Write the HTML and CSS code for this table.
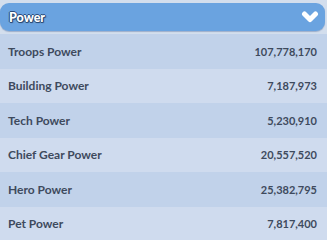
FILE: index.html
```html
<!DOCTYPE html>
<html>
<head>
<meta charset="utf-8">
<link rel="stylesheet" href="styles.css">
</head>
<body>
<div class="panel">
  <div class="header">
    <span class="title">Power</span>
    <svg class="chev" width="18" height="14" viewBox="0 0 18 14"><path d="M3.5 4 L9 9.5 L14.5 4" fill="none" stroke="#fff" stroke-width="5" stroke-linecap="round" stroke-linejoin="round"/></svg>
  </div>
  <div class="rows">
    <div class="row odd"><span>Troops Power</span><span class="num">107,778,170</span></div>
    <div class="row"><span>Building Power</span><span class="num">7,187,973</span></div>
    <div class="row odd"><span>Tech Power</span><span class="num">5,230,910</span></div>
    <div class="row"><span>Chief Gear Power</span><span class="num">20,557,520</span></div>
    <div class="row odd"><span>Hero Power</span><span class="num">25,382,795</span></div>
    <div class="row"><span>Pet Power</span><span class="num">7,817,400</span></div>
  </div>
</div>
</body>
</html>
```
FILE: styles.css
```css
html, body { margin: 0; padding: 0; }
body {
  width: 327px; height: 240px; overflow: hidden;
  background: #d3deed;
  font-family: Lato, "Open Sans", sans-serif;
}
.panel { padding-top: 3px; }
.header {
  height: 28px;
  margin-right: 2px;
  background: #6aa3e0;
  border-radius: 9px;
  box-shadow: 0 1px 1px rgba(60,90,140,0.35);
  display: flex; align-items: center; justify-content: space-between;
  padding: 0 6px 0 9px;
}
.title {
  color: #fff; font-weight: 900; font-size: 12.5px;
  text-shadow: 0 1px 0 #2a4c78, 1px 0 0 #2a4c78, -1px 0 0 #2a4c78, 0 -1px 0 #2a4c78, 1px 1px 1px #2a4c78;
}
.chev { display: block; }
.rows { margin-top: 3px; }
.row {
  height: 34.5px;
  display: flex; align-items: center; justify-content: space-between;
  padding: 0 10px 0 8px;
  background: #cfdbee;
  color: #3e4a5d;
  font-weight: 700; font-size: 12px;
}
.row .num { font-size: 11px; }
.row.odd { background: #c1d2ea; }
```
